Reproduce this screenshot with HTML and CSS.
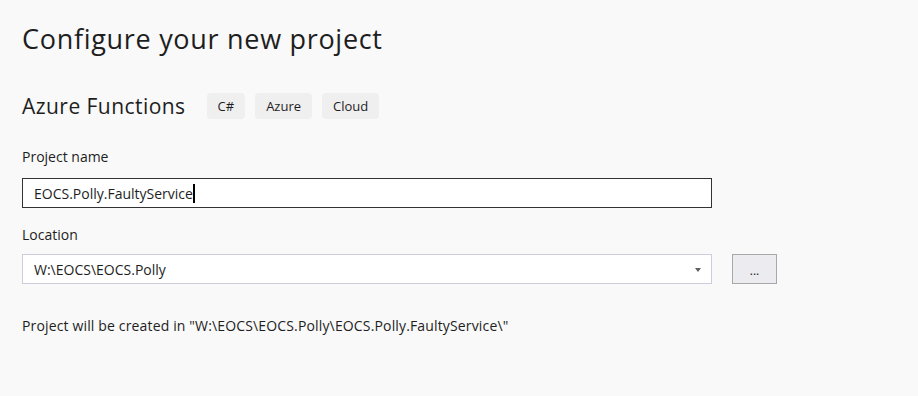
FILE: index.html
```html
<!DOCTYPE html>
<html>
<head>
    <title>Configure your new project</title>
    <link rel="stylesheet" href="styles.css">
</head>
<body>
    <div class="page">
        <h1 class="page-title">Configure your new project</h1>

        <div class="template-row">
            <h2 class="template-name">Azure Functions</h2>
            <span class="tag">C#</span>
            <span class="tag">Azure</span>
            <span class="tag">Cloud</span>
        </div>

        <div class="field first">
            <label class="field-label" for="project_name">Project name</label>
            <div class="text-box focused" id="project_name">
                <span class="text-value">EOCS.Polly.FaultyService</span><span class="caret"></span>
            </div>
        </div>

        <div class="field second">
            <label class="field-label" for="location">Location</label>
            <div class="field-row">
                <div class="text-box combo" id="location">
                    <span class="text-value">W:\EOCS\EOCS.Polly</span>
                    <span class="combo-arrow"></span>
                </div>
                <button class="browse-button">...</button>
            </div>
        </div>

        <p class="summary">Project will be created in "W:\EOCS\EOCS.Polly\EOCS.Polly.FaultyService\"</p>
    </div>
</body>
</html>
```

FILE: styles.css
```css
body {
    margin: 0;
    background-color: #f9f9f9;
    font-family: 'Open Sans', sans-serif;
    color: #1e1e1e;
    height: 100vh;
}

.page {
    padding: 21px 0 0 22px;
    width: 755px;
}

.page-title {
    margin: 0;
    font-size: 27px;
    font-weight: 400;
    letter-spacing: 0.7px;
    line-height: 36px;
}

.template-row {
    display: flex;
    align-items: center;
    gap: 10px;
    margin-top: 35px;
}

.template-name {
    margin: 0 11px 0 0;
    font-size: 21px;
    font-weight: 400;
    letter-spacing: 0.45px;
    line-height: 28px;
}

.tag {
    background-color: #efefef;
    border-radius: 4px;
    font-size: 13px;
    height: 26px;
    line-height: 26px;
    padding: 0 11px;
}

.field.first {
    margin-top: 27px;
}

.field.second {
    margin-top: 17px;
}

.field-label {
    display: block;
    font-size: 14px;
    line-height: 20px;
    margin-bottom: 11px;
}

.field.second .field-label {
    margin-bottom: 9px;
}

.field-row {
    display: flex;
    gap: 20px;
}

.text-box {
    display: flex;
    align-items: center;
    box-sizing: border-box;
    width: 690px;
    height: 30px;
    padding: 0 11px;
    background-color: #ffffff;
    border: 1px solid #cccedb;
    font-size: 14px;
}

.text-box.focused {
    border-color: #333333;
}

.caret {
    display: inline-block;
    width: 2px;
    height: 19px;
    margin-top: 1px;
    background-color: #000000;
}

.combo {
    justify-content: space-between;
}

.combo-arrow {
    width: 0;
    height: 0;
    border-left: 3.5px solid transparent;
    border-right: 3.5px solid transparent;
    border-top: 4px solid #5f5f5f;
    margin: 2px -1px 0 0;
}

.browse-button {
    box-sizing: border-box;
    width: 45px;
    height: 30px;
    background-color: #ebebf0;
    border: 1px solid #a8a8a8;
    font-family: 'Open Sans', sans-serif;
    font-size: 12px;
    line-height: 12px;
    color: #1e1e1e;
    padding: 3px 0 0 0;
}

.summary {
    margin: 32px 0 0 0;
    font-size: 14px;
    letter-spacing: 0.15px;
    line-height: 20px;
}
```
